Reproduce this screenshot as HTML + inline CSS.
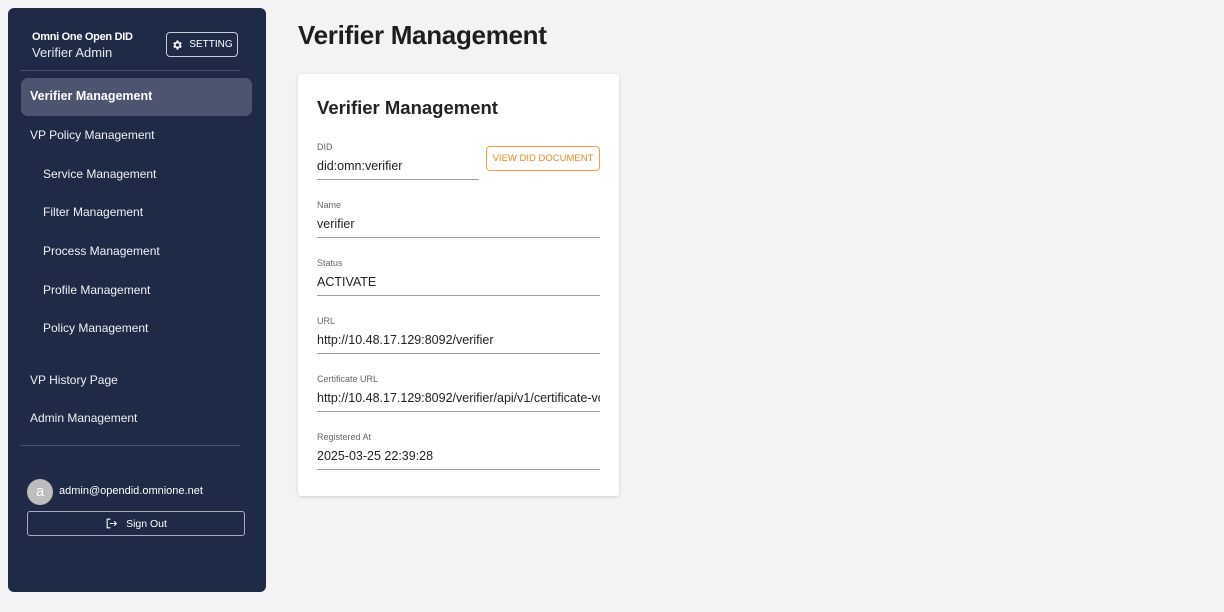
<!DOCTYPE html>
<html><head><meta charset="utf-8"><style>
*{box-sizing:border-box;margin:0;padding:0}
body{width:1224px;height:612px;background:#f3f3f5;font-family:"Liberation Sans",sans-serif;position:relative;overflow:hidden}
.side{position:absolute;left:8px;top:8px;width:258px;height:584px;background:#1f2a47;border-radius:6px;color:#fff}
.logo{position:absolute;left:24px;top:23px;font-size:11px;font-weight:bold;letter-spacing:-0.3px}
.admin{position:absolute;left:24px;top:37px;font-size:13px;color:#e8eaf0}
.setting{position:absolute;left:158px;top:24px;width:72px;height:25px;border:1px solid #c8ccd8;border-radius:4px;font-size:10px;display:flex;align-items:center;justify-content:center;gap:6px}
.hr{position:absolute;left:12px;width:220px;height:1px;background:#4a5470}
.item{position:absolute;left:22px;font-size:12px;color:#f0f1f5}
.active{position:absolute;left:13px;top:70px;width:231px;height:38px;background:#4d5470;border-radius:7px;font-weight:bold;font-size:12.5px;padding:11px 9px}
.av{position:absolute;left:19px;top:471px;width:26px;height:26px;border-radius:50%;background:#bdbdbd;color:#fff;text-align:center;line-height:25px;font-size:15px}
.email{position:absolute;left:51px;top:477px;font-size:11px}
.signout{position:absolute;left:19px;top:503px;width:218px;height:25px;border:1px solid #a8adbd;border-radius:3px;font-size:10.5px;display:flex;align-items:center;justify-content:center;gap:8px}
h1{position:absolute;left:298px;top:20px;font-size:26px;font-weight:bold;color:#1e1e1e;letter-spacing:-0.3px}
.card{position:absolute;left:298px;top:74px;width:321px;height:422px;background:#fff;border-radius:3px;box-shadow:0 1px 3px rgba(0,0,0,.15)}
.card h2{position:absolute;left:19px;top:23px;font-size:18.5px;font-weight:bold;color:#222}
.f{position:absolute;left:19px;width:283px;border-bottom:1px solid #9e9e9e;height:38px}
.f .l{font-size:9px;color:#666;position:absolute;top:0}
.f .v{font-size:12.5px;color:#222;position:absolute;top:17px;white-space:nowrap;overflow:hidden;width:283px}
.btn{position:absolute;left:188px;top:72px;width:114px;height:25px;border:1px solid #f0a040;border-radius:4px;color:#ef8a20;font-size:9.5px;text-align:center;line-height:23px}
</style></head><body>
<div class="side">
<div class="logo">Omni One Open DID</div>
<div class="admin">Verifier Admin</div>
<div class="setting"><svg width="12" height="12" viewBox="0 0 24 24"><path fill="#fff" d="M19.4 13a7.5 7.5 0 000-2l2.1-1.6-2-3.5-2.5 1a7 7 0 00-1.7-1L15 3h-4l-.4 2.9a7 7 0 00-1.700 1l-2.5-1-2 3.5L6.6 11a7.5 7.5 0 000 2l-2.1 1.6 2 3.5 2.5-1a7 7 0 001.7 1L11 21h4l.4-2.9a7 7 0 001.7-1l2.5 1 2-3.5zM13 15.5a3.5 3.5 0 110-7 3.5 3.5 0 010 7z"/></svg>SETTING</div>
<div class="hr" style="top:62px"></div>
<div class="active">Verifier Management</div>
<div class="item" style="top:120px">VP Policy Management</div>
<div class="item" style="left:35px;top:159px">Service Management</div>
<div class="item" style="left:35px;top:197px">Filter Management</div>
<div class="item" style="left:35px;top:236px">Process Management</div>
<div class="item" style="left:35px;top:275px">Profile Management</div>
<div class="item" style="left:35px;top:313px">Policy Management</div>
<div class="item" style="top:365px">VP History Page</div>
<div class="item" style="top:403px">Admin Management</div>
<div class="hr" style="top:437px"></div>
<div class="av">a</div>
<div class="email">admin@opendid.omnione.net</div>
<div class="signout"><svg width="13" height="13" viewBox="0 0 24 24" fill="none" stroke="#fff" stroke-width="2"><path d="M10 4H4v16h6M9 12h12M17 8l4 4-4 4"/></svg>Sign Out</div>
</div>
<h1>Verifier Management</h1>
<div class="card">
<h2>Verifier Management</h2>
<div class="f" style="top:68px;width:162px"><div class="l">DID</div><div class="v">did:omn:verifier</div></div>
<div class="btn">VIEW DID DOCUMENT</div>
<div class="f" style="top:126px"><div class="l">Name</div><div class="v">verifier</div></div>
<div class="f" style="top:184px"><div class="l">Status</div><div class="v">ACTIVATE</div></div>
<div class="f" style="top:242px"><div class="l">URL</div><div class="v">http://10.48.17.129:8092/verifier</div></div>
<div class="f" style="top:300px"><div class="l">Certificate URL</div><div class="v">http://10.48.17.129:8092/verifier/api/v1/certificate-vc</div></div>
<div class="f" style="top:358px"><div class="l">Registered At</div><div class="v">2025-03-25 22:39:28</div></div>
</div>
</body></html>
